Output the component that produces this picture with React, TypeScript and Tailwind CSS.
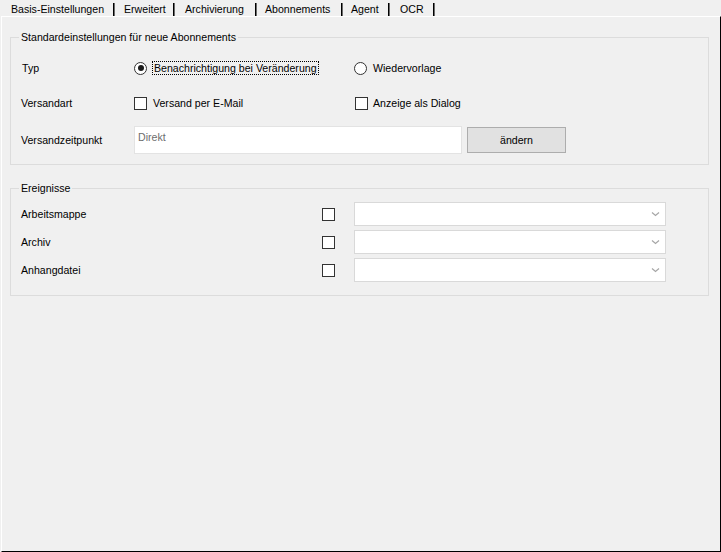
import React from "react";

const tabs = [
  { label: "Basis-Einstellungen", cls: "w-[112px] pl-[10px]" },
  { label: "Erweitert", cls: "w-[58px] pl-[9px]" },
  { label: "Archivierung", cls: "w-[80px] pl-[10px]" },
  { label: "Abonnements", cls: "w-[84px] pl-[8px]" },
  { label: "Agent", cls: "w-[45px] pl-[8px]" },
  { label: "OCR", cls: "w-[43px] pl-[10px]" },
];

const events = ["Arbeitsmappe", "Archiv", "Anhangdatei"];

function CheckBox() {
  return <span className="block h-[13px] w-[13px] shrink-0 border border-[#333333] bg-white" />;
}

function Radio({ checked }: { checked?: boolean }) {
  return (
    <span className="flex h-[13px] w-[13px] shrink-0 items-center justify-center rounded-full border border-[#333333] bg-white">
      {checked && <span className="block h-[6px] w-[6px] rounded-full bg-[#1a1a1a]" />}
    </span>
  );
}

function ComboBox() {
  return (
    <div className="flex h-[24px] w-[312px] items-center justify-end border border-[#d9d9d9] bg-white pr-[4px]">
      <svg width="9" height="6" viewBox="0 0 9 6" className="mr-[1px]">
        <path d="M1 1.5 L4.5 4.5 L8 1.5" fill="none" stroke="#a6a6a6" strokeWidth="1.2" />
      </svg>
    </div>
  );
}

function GroupBox({
  title,
  className,
  children,
}: {
  title: string;
  className: string;
  children: React.ReactNode;
}) {
  return (
    <div className={`relative border border-[#dcdcdc] ${className}`}>
      <span className="absolute -top-[7px] left-[8px] bg-[#f0f0f0] px-[2px] leading-[13px]">
        {title}
      </span>
      {children}
    </div>
  );
}

export default function App() {
  return (
    <div className="flex h-[552px] w-[721px] flex-col bg-[#f0f0f0] font-['Liberation_Sans',Arial,sans-serif] text-[10.6px] leading-[13px] text-black">
      {/* tab strip */}
      <div className="flex h-[16px] pl-[1px]">
        {tabs.map((t) => (
          <div key={t.label} className="flex">
            <span className={`pt-[3px] whitespace-nowrap ${t.cls}`}>{t.label}</span>
            <span className="mt-[3px] flex h-[13px]">
              <span className="w-[1px] bg-black" />
              <span className="w-[1px] bg-[#6b6b6b]" />
            </span>
          </div>
        ))}
      </div>

      {/* page */}
      <div className="ml-[1px] flex-1 border-t border-l border-t-white border-l-white border-r border-b border-r-black border-b-black pl-[8px]">
        <GroupBox title="Standardeinstellungen für neue Abonnements" className="mt-[20px] h-[128px] w-[699px] pt-[23px]">
          <div className="flex h-[14px] items-center pl-[11px]">
            <span className="w-[112px]">Typ</span>
            <div className="flex w-[220px] items-center">
              <Radio checked />
              <span className="ml-[5px] border border-dotted border-black px-[1px] leading-[12px]">
                Benachrichtigung bei Veränderung
              </span>
            </div>
            <div className="flex items-center">
              <Radio />
              <span className="ml-[6px]">Wiedervorlage</span>
            </div>
          </div>

          <div className="mt-[21px] flex h-[14px] items-center pl-[10px]">
            <span className="w-[113px]">Versandart</span>
            <div className="flex w-[221px] items-center">
              <CheckBox />
              <span className="ml-[6px]">Versand per E-Mail</span>
            </div>
            <div className="flex items-center">
              <CheckBox />
              <span className="ml-[5px]">Anzeige als Dialog</span>
            </div>
          </div>

          <div className="mt-[16px] flex h-[28px] items-center pl-[10px]">
            <span className="w-[113px]">Versandzeitpunkt</span>
            <div className="h-[28px] w-[328px] border border-[#e3e3e3] bg-white pl-[3px] pt-[4px] text-[#6d6d6d]">
              Direkt
            </div>
            <button className="ml-[5px] h-[26px] w-[99px] border border-[#adadad] bg-[#e1e1e1] text-center">
              ändern
            </button>
          </div>
        </GroupBox>

        <GroupBox title="Ereignisse" className="mt-[23px] h-[108px] w-[699px] pt-[13px]">
          <div className="flex flex-col gap-[4px]">
            {events.map((e) => (
              <div key={e} className="flex h-[24px] items-center pl-[10px]">
                <span className="w-[301px]">{e}</span>
                <CheckBox />
                <span className="w-[19px]" />
                <ComboBox />
              </div>
            ))}
          </div>
        </GroupBox>
      </div>
    </div>
  );
}
